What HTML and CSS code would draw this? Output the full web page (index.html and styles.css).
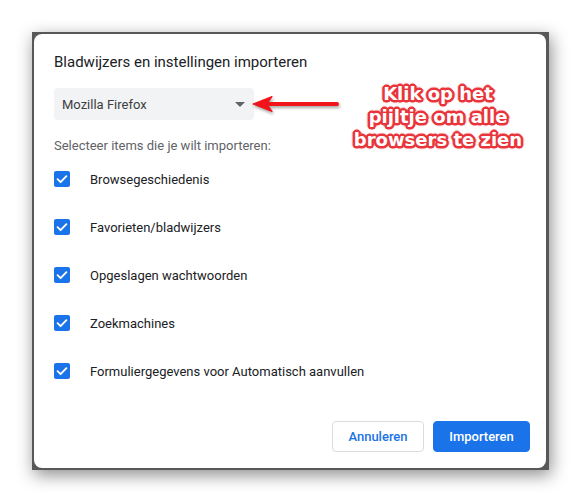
FILE: index.html
```html
<!DOCTYPE html>
<html lang="nl">
<head>
<meta charset="utf-8">
<title>Bladwijzers importeren</title>
<link rel="stylesheet" href="styles.css">
</head>
<body>
<div class="stage">
  <div class="frame">
    <div class="dialog">
      <h1 class="title">Bladwijzers en instellingen importeren</h1>
      <div class="select">
        <span>Mozilla Firefox</span>
        <span class="caret"></span>
      </div>
      <p class="hint">Selecteer items die je wilt importeren:</p>
      <ul class="items">
        <li><span class="check"><svg viewBox="0 0 16 16" width="16" height="16"><path d="M3.6 8.2l3 3 5.8-6" fill="none" stroke="#fff" stroke-width="1.9" stroke-linecap="round" stroke-linejoin="round"/></svg></span>Browsegeschiedenis</li>
        <li><span class="check"><svg viewBox="0 0 16 16" width="16" height="16"><path d="M3.6 8.2l3 3 5.8-6" fill="none" stroke="#fff" stroke-width="1.9" stroke-linecap="round" stroke-linejoin="round"/></svg></span>Favorieten/bladwijzers</li>
        <li><span class="check"><svg viewBox="0 0 16 16" width="16" height="16"><path d="M3.6 8.2l3 3 5.8-6" fill="none" stroke="#fff" stroke-width="1.9" stroke-linecap="round" stroke-linejoin="round"/></svg></span>Opgeslagen wachtwoorden</li>
        <li><span class="check"><svg viewBox="0 0 16 16" width="16" height="16"><path d="M3.6 8.2l3 3 5.8-6" fill="none" stroke="#fff" stroke-width="1.9" stroke-linecap="round" stroke-linejoin="round"/></svg></span>Zoekmachines</li>
        <li><span class="check"><svg viewBox="0 0 16 16" width="16" height="16"><path d="M3.6 8.2l3 3 5.8-6" fill="none" stroke="#fff" stroke-width="1.9" stroke-linecap="round" stroke-linejoin="round"/></svg></span>Formuliergegevens voor Automatisch aanvullen</li>
      </ul>
      <div class="actions">
        <button class="btn btn-cancel">Annuleren</button>
        <button class="btn btn-primary">Importeren</button>
      </div>
    </div>
  </div>
  <svg class="arrow" width="92" height="22" viewBox="0 0 92 22">
    <path d="M85 11H14" stroke="#f0141b" stroke-width="4" stroke-linecap="round" fill="none"/>
    <path d="M1 11L20 3.5L15 11L20 18.5Z" fill="#f0141b" stroke="#f0141b" stroke-width="1.2" stroke-linejoin="round"/>
  </svg>
  <div class="note">Klik op het<br>pijltje om alle<br>browsers te zien</div>
</div>
</body>
</html>
```
FILE: styles.css
```css
html, body {
  margin: 0;
  padding: 0;
  background: #ffffff;
}
.stage {
  position: relative;
  width: 581px;
  height: 502px;
  padding: 32px 0 0 32px;
  box-sizing: border-box;
  font-family: Roboto, "Liberation Sans", sans-serif;
}
.frame {
  width: 517px;
  height: 438px;
  background: #585858;
  box-shadow: 2px 5px 16px rgba(0, 0, 0, 0.45);
  padding: 2px 3px 2px 2px;
  box-sizing: border-box;
  display: flex;
}
.dialog {
  flex: 1;
  background: #fff;
  border-radius: 8px;
  padding: 18px 16px 16px 20px;
  display: flex;
  flex-direction: column;
}
.title {
  margin: 0;
  font-size: 15px;
  font-weight: 400;
  color: #202124;
  line-height: 20px;
}
.select {
  margin-top: 16px;
  width: 200px;
  height: 32px;
  box-sizing: border-box;
  background: #f1f3f4;
  border-radius: 4px;
  display: flex;
  align-items: center;
  justify-content: space-between;
  padding: 0 8px;
  font-size: 13px;
  color: #3c4043;
}
.caret {
  width: 0;
  height: 0;
  border-left: 5px solid transparent;
  border-right: 5px solid transparent;
  border-top: 5px solid #5f6368;
  margin-right: 1px;
}
.hint {
  margin: 18px 0 0;
  font-size: 13px;
  color: #5f6368;
  line-height: 16px;
}
.items {
  list-style: none;
  margin: 17px 0 0;
  padding: 0;
  display: flex;
  flex-direction: column;
  gap: 32px;
}
.items li {
  display: flex;
  align-items: center;
  height: 16px;
  font-size: 13px;
  color: #202124;
}
.check {
  width: 16px;
  height: 16px;
  background: #1a73e8;
  border-radius: 2px;
  margin-right: 20px;
  display: flex;
}
.actions {
  margin-top: auto;
  display: flex;
  justify-content: flex-end;
  gap: 9px;
}
.btn {
  height: 31px;
  border-radius: 4px;
  font-family: Roboto, "Liberation Sans", sans-serif;
  font-size: 13px;
  font-weight: 500;
  padding: 0;
}
.btn-cancel {
  width: 92px;
  background: #fff;
  border: 1px solid #dadce0;
  color: #1a73e8;
}
.btn-primary {
  width: 97px;
  background: #1a73e8;
  border: 1px solid #1a73e8;
  color: #fff;
}
.arrow {
  position: absolute;
  left: 252px;
  top: 93px;
  filter: drop-shadow(1px 2px 1.5px rgba(0,0,0,0.35));
}
.note {
  position: absolute;
  left: 338px;
  top: 82px;
  width: 200px;
  text-align: center;
  font-family: "DejaVu Sans", Verdana, sans-serif;
  font-weight: 700;
  font-size: 18px;
  line-height: 23px;
  color: #fff;
  letter-spacing: 0;
  text-shadow:
    2px 0 0 #e8343a, -2px 0 0 #e8343a, 0 2px 0 #e8343a, 0 -2px 0 #e8343a,
    1.5px 1.5px 0 #e8343a, -1.5px 1.5px 0 #e8343a, 1.5px -1.5px 0 #e8343a, -1.5px -1.5px 0 #e8343a,
    1px 2px 0 #e8343a, -1px 2px 0 #e8343a, 2px 1px 0 #e8343a, -2px 1px 0 #e8343a,
    1px -2px 0 #e8343a, -1px -2px 0 #e8343a, 2px -1px 0 #e8343a, -2px -1px 0 #e8343a,
    3px 0 1px rgba(232,52,58,0.6), -3px 0 1px rgba(232,52,58,0.6), 0 3px 1px rgba(232,52,58,0.6), 0 -3px 1px rgba(232,52,58,0.6);
}
```
